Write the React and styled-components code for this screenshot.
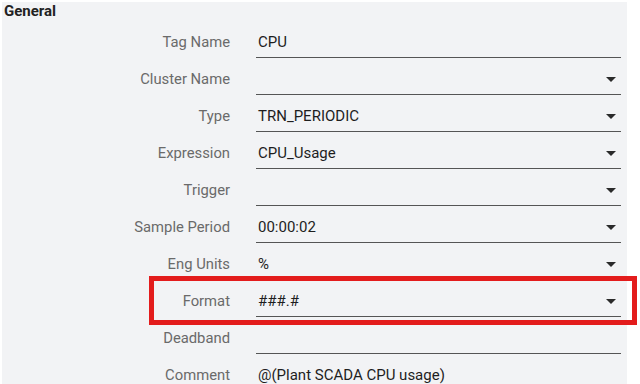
import React from "react";
import styled, { createGlobalStyle } from "styled-components";

const GlobalStyle = createGlobalStyle`
  html, body {
    margin: 0;
    padding: 0;
    background: #ffffff;
    overflow: hidden;
    font-family: Roboto, "Liberation Sans", sans-serif;
  }
`;

const Page = styled.div`
  padding: 2px 0 0 2px;
`;

const Panel = styled.section`
  width: 625px;
  height: 400px;
  background: #f2f3f5;
  display: flex;
  flex-direction: column;
  gap: 5px;
`;

const Header = styled.h2`
  margin: 0;
  padding-left: 2px;
  height: 19px;
  line-height: 19px;
  font-size: 15px;
  font-weight: 700;
  color: #222;
`;

const Row = styled.div`
  position: relative;
  display: grid;
  grid-template-columns: 228px 365px;
  column-gap: 26px;
  align-items: center;
  height: 32px;

  ${({ $highlight }) =>
    $highlight &&
    `
    &::after {
      content: "";
      position: absolute;
      left: 147px;
      right: -10px;
      top: -9px;
      bottom: -8px;
      border: 5px solid #e31c1c;
      pointer-events: none;
    }
  `}
`;

const Label = styled.label`
  text-align: right;
  font-size: 14.8px;
  color: #6a6a6a;
`;

const Field = styled.div`
  height: 32px;
  box-sizing: border-box;
  display: flex;
  align-items: center;
  justify-content: space-between;
  padding: 0 5px 0 2px;
  border-bottom: ${({ $plain }) => ($plain ? "none" : "1px solid #555")};
  font-size: 15px;
  color: #1e1e1e;
`;

const Caret = styled.span`
  width: 0;
  height: 0;
  border-left: 5px solid transparent;
  border-right: 5px solid transparent;
  border-top: 5px solid #2a2a2a;
  margin-top: 2px;
`;

const fields = [
  { label: "Tag Name", value: "CPU" },
  { label: "Cluster Name", value: "", select: true },
  { label: "Type", value: "TRN_PERIODIC", select: true },
  { label: "Expression", value: "CPU_Usage", select: true },
  { label: "Trigger", value: "", select: true },
  { label: "Sample Period", value: "00:00:02", select: true },
  { label: "Eng Units", value: "%", select: true },
  { label: "Format", value: "###.#", select: true, highlight: true },
  { label: "Deadband", value: "" },
  { label: "Comment", value: "@(Plant SCADA CPU usage)", plain: true },
];

export default function App() {
  return (
    <>
      <GlobalStyle />
      <Page>
        <Panel>
          <Header>General</Header>
          {fields.map((f) => (
            <Row key={f.label} $highlight={f.highlight}>
              <Label>{f.label}</Label>
              <Field $plain={f.plain}>
                <span>{f.value}</span>
                {f.select && <Caret />}
              </Field>
            </Row>
          ))}
        </Panel>
      </Page>
    </>
  );
}
